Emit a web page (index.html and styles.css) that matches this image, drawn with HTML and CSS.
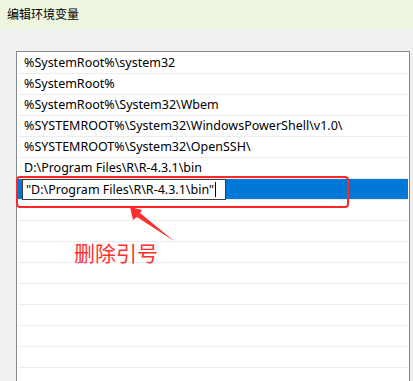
FILE: index.html
```html
<!DOCTYPE html>
<html lang="zh-CN">
<head>
    <meta charset="UTF-8">
    <meta name="viewport" content="width=device-width, initial-scale=1.0">
    <title>编辑环境变量</title>
    <link rel="stylesheet" href="styles.css">
</head>
<body>
    <div class="titlebar">编辑环境变量</div>
    <div class="dialog">
        <div class="path-list">
            <div class="row">%SystemRoot%\system32</div>
            <div class="row">%SystemRoot%</div>
            <div class="row">%SystemRoot%\System32\Wbem</div>
            <div class="row">%SYSTEMROOT%\System32\WindowsPowerShell\v1.0\</div>
            <div class="row">%SYSTEMROOT%\System32\OpenSSH\</div>
            <div class="row">D:\Program Files\R\R-4.3.1\bin</div>
            <div class="row selected">
                <div class="edit-box">"D:\Program Files\R\R-4.3.1\bin"<span class="caret"></span></div>
            </div>
            <div class="row"></div>
            <div class="row"></div>
            <div class="row"></div>
            <div class="row"></div>
            <div class="row"></div>
            <div class="row"></div>
            <div class="row"></div>
            <div class="row"></div>
            <div class="row"></div>
        </div>

        <!-- annotation drawn over the screenshot -->
        <div class="mark-box"></div>
        <svg class="mark-arrow" width="413" height="381" viewBox="0 0 413 381">
            <polygon points="130,207 142,210 140,213 174,241 137,217 133,220" fill="#ff2d2d"/>
        </svg>
        <div class="mark-text">删除引号</div>
    </div>
</body>
</html>
```

FILE: styles.css
```css
body {
    margin: 0;
    width: 413px;
    height: 381px;
    overflow: hidden;
    background-color: #f0f0f0;
    font-family: "Noto Sans", "Noto Sans CJK SC", sans-serif;
    position: relative;
}

.titlebar {
    height: 29px;
    line-height: 29px;
    padding-left: 7px;
    background-color: #eef6e1;
    font-size: 12px;
    color: #000;
}

.dialog {
    padding: 22px 5px 0 16px;
}

.path-list {
    width: 390px;
    border: 1px solid #828790;
    padding: 1px;
    background-color: #fff;
}

.row {
    height: 20px;
    line-height: 20px;
    border-bottom: 1px solid #ececec;
    padding-left: 6px;
    font-size: 12.5px;
    color: #000;
    white-space: nowrap;
}

.row.selected {
    background-color: #0078d7;
    padding-left: 4px;
}

.edit-box {
    display: inline-flex;
    align-items: center;
    box-sizing: border-box;
    width: 204px;
    height: 21px;
    padding-left: 3px;
    background-color: #fff;
    border: 1px solid #3c3c3c;
    vertical-align: top;
}

.caret {
    display: inline-block;
    width: 1px;
    height: 15px;
    margin-left: 1px;
    background-color: #000;
}

.mark-box {
    position: absolute;
    left: 16px;
    top: 176px;
    width: 329px;
    height: 28px;
    border: 2px solid #ff2626;
    border-radius: 4px;
}

.mark-arrow {
    position: absolute;
    left: 0;
    top: 0;
}

.mark-text {
    position: absolute;
    left: 74px;
    top: 237px;
    font-family: "Noto Sans CJK SC", sans-serif;
    font-size: 21px;
    color: #ff3030;
}
```
